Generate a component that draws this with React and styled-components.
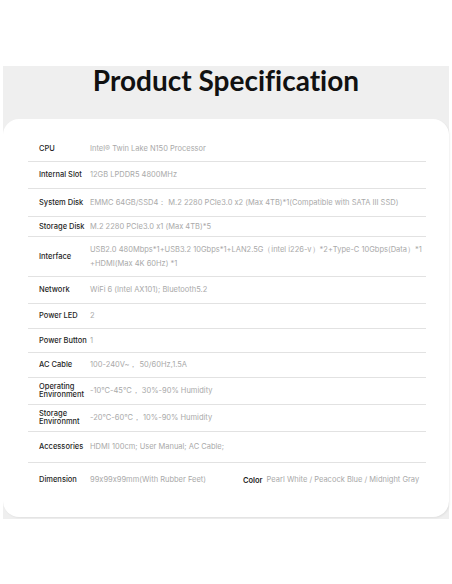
import React from "react";
import styled, { createGlobalStyle } from "styled-components";

const GlobalStyle = createGlobalStyle`
  html, body {
    margin: 0;
    padding: 0;
    background: #ffffff;
  }
  body {
    font-family: Inter, "Liberation Sans", sans-serif;
    font-feature-settings: "calt" 0, "liga" 0;
    font-variant-ligatures: none;
  }
`;

const specs = [
  { label: "CPU", value: "Intel® Twin Lake N150 Processor", h: 25 },
  { label: "Internal Slot", value: "12GB LPDDR5 4800MHz", h: 27 },
  {
    label: "System Disk",
    value:
      "EMMC 64GB/SSD4： M.2 2280 PCIe3.0 x2 (Max 4TB)*1(Compatible with SATA III SSD)",
    h: 28,
  },
  { label: "Storage Disk", value: "M.2 2280 PCIe3.0 x1 (Max 4TB)*5", h: 20 },
  {
    label: "Interface",
    value: [
      "USB2.0 480Mbps*1+USB3.2 10Gbps*1+LAN2.5G（intel i226-v）*2+Type-C 10Gbps(Data）*1",
      "+HDMI(Max 4K 60Hz) *1",
    ],
    h: 40,
  },
  { label: "Network", value: "WiFi 6 (Intel AX101); Bluetooth5.2", h: 27 },
  { label: "Power LED", value: "2", h: 25 },
  { label: "Power Button", value: "1", h: 24 },
  { label: "AC Cable", value: "100-240V~， 50/60Hz,1.5A", h: 25 },
  {
    label: ["Operating", "Environment"],
    value: "-10°C-45°C， 30%-90% Humidity",
    h: 27,
  },
  {
    label: ["Storage", "Environmnt"],
    value: "-20°C-60°C， 10%-90% Humidity",
    h: 27,
  },
  { label: "Accessories", value: "HDMI 100cm; User Manual; AC Cable;", h: 31 },
];

export default function App() {
  return (
    <>
      <GlobalStyle />
      <Page>
        <Band>
          <Title>Product Specification</Title>
          <Card>
            <Table>
              {specs.map((s, i) => (
                <Row key={i} $h={s.h}>
                  <Label $stacked={Array.isArray(s.label)}>
                    {Array.isArray(s.label)
                      ? s.label.map((l) => <span key={l}>{l}</span>)
                      : s.label}
                  </Label>
                  <Value>
                    {Array.isArray(s.value)
                      ? s.value.map((v) => <span key={v}>{v}</span>)
                      : s.value}
                  </Value>
                </Row>
              ))}
              <Row $h={34} $last>
                <Label>Dimension</Label>
                <Split>
                  <Value>99x99x99mm(With Rubber Feet)</Value>
                  <ColorPair>
                    <ColorLabel>Color</ColorLabel>
                    <Value>Pearl White / Peacock Blue / Midnight Gray</Value>
                  </ColorPair>
                </Split>
              </Row>
            </Table>
          </Card>
        </Band>
      </Page>
    </>
  );
}

const Page = styled.div`
  width: 452px;
  height: 584px;
  padding-top: 66px;
  box-sizing: border-box;
`;

const Band = styled.div`
  margin: 0 3px;
  background: #efefef;
  padding-bottom: 2px;
`;

const Title = styled.h1`
  margin: 0;
  height: 53px;
  text-align: center;
  font-family: Lato, "Liberation Sans", sans-serif;
  font-size: 28px;
  font-weight: 700;
  line-height: 28px;
  color: #111111;
  font-variant-ligatures: none;
`;

const Card = styled.div`
  background: #ffffff;
  border-radius: 16px;
  padding: 18px 23px 20px 25px;
  box-shadow: 1px 1px 2px rgba(0, 0, 0, 0.06);
`;

const Table = styled.div`
  display: flex;
  flex-direction: column;
`;

const Row = styled.div`
  display: grid;
  grid-template-columns: 51px 1fr;
  align-items: center;
  box-sizing: border-box;
  height: ${(p) => p.$h}px;
  padding-left: 11px;
  border-bottom: ${(p) => (p.$last ? "none" : "1px solid #e2e2e2")};
`;

const Label = styled.div`
  display: flex;
  flex-direction: column;
  font-size: 7.5px;
  font-weight: 500;
  color: #1f1f1f;
  line-height: ${(p) => (p.$stacked ? "8px" : "10px")};
  white-space: nowrap;
`;

const Value = styled.div`
  display: flex;
  flex-direction: column;
  font-size: 7.5px;
  color: #a9a9a9;
  line-height: 14px;
  white-space: nowrap;
`;

const Split = styled.div`
  display: grid;
  grid-template-columns: 153px auto;
  align-items: center;
`;

const ColorPair = styled.div`
  display: flex;
  align-items: center;
  gap: 4px;
`;

const ColorLabel = styled.span`
  font-size: 7.5px;
  font-weight: 600;
  color: #1f1f1f;
`;
